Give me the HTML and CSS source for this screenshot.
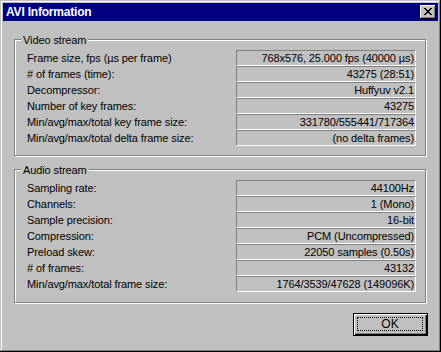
FILE: index.html
```html
<!DOCTYPE html>
<html lang="en">
<head>
    <meta charset="UTF-8">
    <title>AVI Information</title>
    <link rel="stylesheet" href="styles.css">
</head>
<body>
    <div class="window">
        <div class="title-bar">
            <span class="title">AVI Information</span>
            <button class="close-btn" type="button" aria-label="Close">
                <svg width="8" height="7" viewBox="0 0 8 7" shape-rendering="crispEdges">
                    <path d="M0 0h2v1h-2z M6 0h2v1h-2z M1 1h2v1h-2z M5 1h2v1h-2z M2 2h4v1h-4z M3 3h2v1h-2z M2 4h4v1h-4z M1 5h2v1h-2z M5 5h2v1h-2z M0 6h2v1h-2z M6 6h2v1h-2z" fill="#000"/>
                </svg>
            </button>
        </div>

        <div class="content">
            <div class="group video">
                <div class="group-title">Video stream</div>
                <div class="rows">
                    <span class="label">Frame size, fps (µs per frame)</span>
                    <span class="value">768x576, 25.000 fps (40000 µs)</span>

                    <span class="label"># of frames (time):</span>
                    <span class="value">43275 (28:51)</span>

                    <span class="label">Decompressor:</span>
                    <span class="value">Huffyuv v2.1</span>

                    <span class="label">Number of key frames:</span>
                    <span class="value">43275</span>

                    <span class="label">Min/avg/max/total key frame size:</span>
                    <span class="value">331780/555441/717364</span>

                    <span class="label">Min/avg/max/total delta frame size:</span>
                    <span class="value">(no delta frames)</span>
                </div>
            </div>

            <div class="group audio">
                <div class="group-title">Audio stream</div>
                <div class="rows">
                    <span class="label">Sampling rate:</span>
                    <span class="value">44100Hz</span>

                    <span class="label">Channels:</span>
                    <span class="value">1 (Mono)</span>

                    <span class="label">Sample precision:</span>
                    <span class="value">16-bit</span>

                    <span class="label">Compression:</span>
                    <span class="value">PCM (Uncompressed)</span>

                    <span class="label">Preload skew:</span>
                    <span class="value">22050 samples (0.50s)</span>

                    <span class="label"># of frames:</span>
                    <span class="value">43132</span>

                    <span class="label">Min/avg/max/total frame size:</span>
                    <span class="value">1764/3539/47628 (149096K)</span>
                </div>
            </div>

            <div class="buttons">
                <button class="ok-btn" type="button"><span class="focus">OK</span></button>
            </div>
        </div>
    </div>
</body>
</html>
```

FILE: styles.css
```css
body {
    margin: 0;
    padding: 0;
    font-family: "Liberation Sans", Arial, sans-serif;
    font-size: 11px;
    letter-spacing: -0.1px;
    color: #000;
    background-color: #c0c0c0;
}

.window {
    width: 441px;
    height: 352px;
    box-sizing: border-box;
    padding: 3px;
    background-color: #c0c0c0;
    box-shadow: inset -1px -1px #000, inset 1px 1px #c0c0c0, inset -2px -2px #808080, inset 2px 2px #fff;
}

.title-bar {
    height: 18px;
    background-color: #000080;
    display: flex;
    align-items: center;
    justify-content: space-between;
    padding: 0 2px 0 3px;
}

.title {
    color: #fff;
    font-weight: bold;
    font-size: 12px;
    letter-spacing: -0.2px;
    line-height: 18px;
}

.close-btn {
    width: 16px;
    height: 14px;
    padding: 0;
    border: none;
    background-color: #c0c0c0;
    box-shadow: inset -1px -1px #000, inset 1px 1px #fff, inset -2px -2px #808080;
    display: flex;
    align-items: center;
    justify-content: center;
}

.close-btn svg {
    display: block;
    margin: 0 1px 1px 0;
}

.content {
    padding: 18px 11px 0 11px;
}

.group {
    width: 412px;
    box-sizing: border-box;
    border: 1px solid #808080;
    box-shadow: inset 1px 1px #fff, 1px 1px #fff;
    padding: 0 9px 9px 12px;
}

.group.audio {
    margin-top: 13px;
    padding-bottom: 10px;
}

.group-title {
    width: fit-content;
    margin: -6px 0 3px -6px;
    padding: 0 2px;
    line-height: 13px;
    background-color: #c0c0c0;
}

.rows {
    display: grid;
    grid-template-columns: 1fr 180px;
}

.label {
    line-height: 16px;
    white-space: nowrap;
}

.value {
    height: 16px;
    box-sizing: border-box;
    border-top: 1px solid #808080;
    border-left: 1px solid #808080;
    border-bottom: 1px solid #fff;
    border-right: 1px solid #fff;
    text-align: right;
    padding-right: 1px;
    line-height: 14px;
    white-space: nowrap;
}

.buttons {
    display: flex;
    justify-content: flex-end;
    margin-top: 10px;
    margin-right: -1px;
}

.ok-btn {
    width: 75px;
    height: 23px;
    box-sizing: border-box;
    padding: 0;
    border: 1px solid #000;
    background-color: #c0c0c0;
    box-shadow: inset 1px 1px #fff, inset -1px -1px #000, inset -2px -2px #808080;
    font-family: "Liberation Sans", Arial, sans-serif;
    font-size: 12px;
    color: #000;
    display: flex;
}

.focus {
    flex: 1;
    margin: 3px 4px 4px 3px;
    border: 1px dotted #000;
    line-height: 13px;
    text-align: center;
}
```
